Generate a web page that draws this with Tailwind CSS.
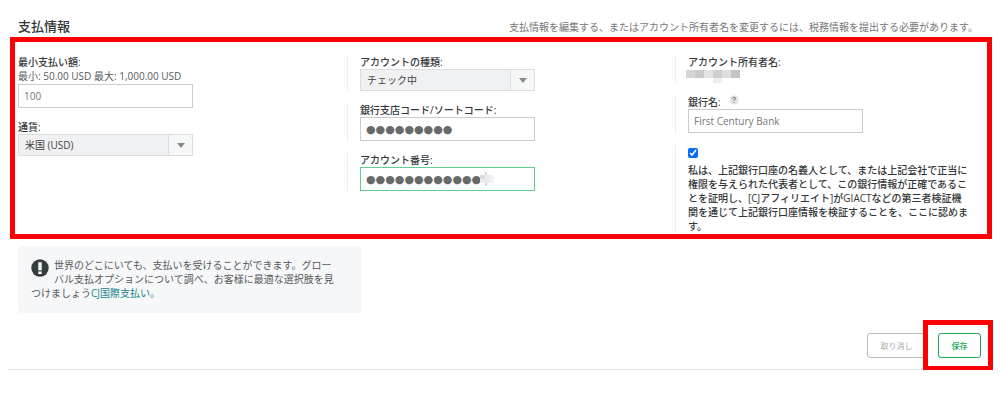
<!DOCTYPE html>
<html lang="ja">
<head>
<meta charset="utf-8">
<meta name="viewport" content="width=device-width, initial-scale=1">
<title>支払情報</title>
<script src="https://cdn.jsdelivr.net/npm/@tailwindcss/browser@4"></script>
</head>
<body class="bg-white font-['Open_Sans','Noto_Sans_CJK_JP',sans-serif] text-[10px] leading-[14px] text-[#555a5c]">
<main class="pt-[17px]">
  <header class="flex items-center justify-between pr-[22px] pb-px pl-[18px]">
    <h1 class="text-[13px] leading-[19px] font-medium text-[#333738]">支払情報</h1>
    <p class="text-[#777]">支払情報を編集する、またはアカウント所有者名を変更するには、税務情報を提出する必要があります。</p>
  </header>

  <form id="payment">
    <section class="mr-2 ml-[10px] grid grid-cols-[329fr_328fr_312fr] border-[5px] border-[#fe0002] pt-[13px] pb-px pl-[3px]">
      <div class="flex flex-col gap-3">
        <div>
          <label for="min" class="block font-medium text-[#333738]">最小支払い額:</label>
          <p class="mb-px">最小: 50.00 USD 最大: 1,000.00 USD</p>
          <input id="min" type="text" value="100" class="block h-6 w-[175px] border border-[#ccc] px-[5px] text-[#777]">
        </div>
        <div>
          <label for="currency" class="block font-medium text-[#333738]">通貨:</label>
          <div class="relative w-[175px]">
            <select id="currency" class="block h-[22px] w-full appearance-none border border-[#dcdde0] bg-[#f0f1f3] px-[6px] text-[#444]"><option>米国 (USD)</option></select>
            <span class="pointer-events-none absolute inset-y-px right-px flex w-6 items-center justify-center border-l border-[#dcdde0] bg-[#f6f7f8]"><svg class="h-[5px] w-2" viewBox="0 0 8 5" fill="#888"><path d="M0 0h8L4 5z"/></svg></span>
          </div>
        </div>
      </div>

      <div class="flex flex-col gap-3">
        <div class="border-l border-[#eee] pl-3">
          <label for="type" class="block font-medium text-[#333738]">アカウントの種類:</label>
          <div class="relative w-[175px]">
            <select id="type" class="block h-[22px] w-full appearance-none border border-[#dcdde0] bg-[#f0f1f3] px-[6px] text-[#444]"><option>チェック中</option></select>
            <span class="pointer-events-none absolute inset-y-px right-px flex w-6 items-center justify-center border-l border-[#dcdde0] bg-[#f6f7f8]"><svg class="h-[5px] w-2" viewBox="0 0 8 5" fill="#888"><path d="M0 0h8L4 5z"/></svg></span>
          </div>
        </div>
        <div class="border-l border-[#eee] pl-3">
          <label for="sort" class="block font-medium text-[#333738]">銀行支店コード/ソートコード:</label>
          <input id="sort" type="text" autocomplete="off" value="●●●●●●●●●" class="block h-6 w-[175px] border border-[#ccc] px-[5px] font-['DejaVu_Sans'] text-[11px] text-[#666b6a]">
        </div>
        <div class="border-l border-[#eee] pl-3">
          <label for="number" class="block font-medium text-[#333738]">アカウント番号:</label>
          <div class="relative w-[175px]">
            <input id="number" type="text" autocomplete="off" value="●●●●●●●●●●●●" class="block h-6 w-full border border-[#62cf91] px-[5px] font-['DejaVu_Sans'] text-[11px] text-[#666b6a]">
            <svg class="absolute top-[5px] left-[120px] h-[14px] w-[14px]" viewBox="0 0 14 14"><path fill="#d9dcdc" d="M0 3h5v4H0z"/><path fill="#e9ebee" d="M0 7h5v4H0zM5 3h5v8H5z"/><path fill="#f2f3f5" d="M10 3h4v8h-4z"/><path stroke="#999" stroke-width=".8" d="M6 0v3M6 11v3"/></svg>
          </div>
        </div>
      </div>

      <div class="flex flex-col gap-3">
        <div class="border-l border-[#eee] pl-3">
          <h2 class="font-medium text-[#333738]">アカウント所有者名:</h2>
          <svg class="-ml-[2px] h-[14px] w-[56px]" viewBox="0 0 56 14"><path fill="#d5d5d5" d="M0 1h9v8H0z"/><path fill="#cbcbcb" d="M9 1h9v8H9z"/><path fill="#e3e3e3" d="M18 1h9v8h-9z"/><path fill="#d0d0d0" d="M27 1h9v8h-9z"/><path fill="#dedede" d="M36 1h9v8h-9z"/><path fill="#c4c4c4" d="M45 1h9v8h-9z"/><path fill="#eee" d="M27 9h9v5h-9z"/></svg>
        </div>
        <div class="border-l border-[#eee] pl-3">
          <div class="flex gap-2">
            <label for="bank" class="block font-medium text-[#333738]">銀行名:</label>
            <svg class="h-[10px] w-[10px]" viewBox="0 0 10 10" role="img" aria-label="ヘルプ"><circle cx="5" cy="5" r="4.6" fill="#e4e4e4"/><path d="M3.6 3.7a1.4 1.3 0 1 1 2 1.1q-.6.3-.6 1M5 6.9v1" fill="none" stroke="#888" stroke-width="1.1"/></svg>
          </div>
          <input id="bank" type="text" value="First Century Bank" class="block h-6 w-[175px] border border-[#ccc] px-[5px] text-[#777]">
        </div>
        <div class="border-l border-[#eee] pt-[3px] pr-[9px] pl-3">
          <input id="agree" type="checkbox" checked class="mb-[5px] block h-[10px] w-[10px] accent-[#0a6cf5]">
          <label for="agree" class="block font-medium text-[#333738]">私は、上記銀行口座の名義人として、または上記会社で正当に<br>権限を与えられた代表者として、この銀行情報が正確であるこ<br>とを証明し、[CJアフィリエイト]がGIACTなどの第三者検証機<br>関を通じて上記銀行口座情報を検証することを、ここに認めま<br>す。</label>
        </div>
      </div>
    </section>
  </form>

  <aside class="mt-[7px] ml-[18px] w-[344px] rounded-[3px] bg-[#f6f7f9] pt-3 pr-[21px] pb-[13px] pl-[13px]">
    <svg class="mt-px mr-[5px] float-left h-[18px] w-[18px]" viewBox="0 0 18 18"><circle cx="9" cy="9" r="8.7" fill="#363d3f"/><path fill="#fff" d="M7.3 3.2h3.4v8H7.3zM7.3 12.4h3.4v2.6H7.3z"/></svg>
    <p>世界のどこにいても、支払いを受けることができます。グローバル支払オプションについて調べ、お客様に最適な選択肢を見つけましょう<a href="#" class="text-[#208590]">CJ国際支払い。</a></p>
  </aside>

  <footer class="mx-[7px] mt-5 flex justify-end gap-3 border-b border-[#e8e8e8] pr-3 pb-[11px]">
    <button type="button" class="h-[25px] w-[59px] rounded-[3px] border border-[#bbb] text-[8px] text-[#aaa]">取り消し</button>
    <div class="relative">
      <button type="submit" form="payment" class="block h-[25px] w-[43px] rounded-[3px] border border-[#1ba857] text-[8px] font-medium text-[#1ba857]">保存</button>
      <span class="pointer-events-none absolute -top-[13px] -right-3 -bottom-[13px] -left-[15px] border-[5px] border-[#fe0002]"></span>
    </div>
  </footer>
</main>
</body>
</html>
